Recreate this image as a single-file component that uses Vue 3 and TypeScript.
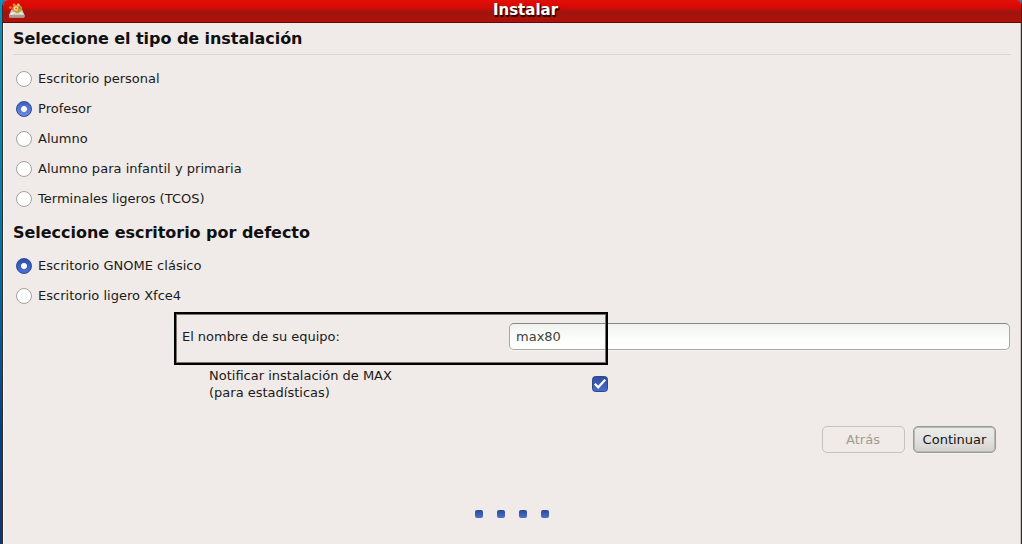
<script setup lang="ts">
import { ref } from 'vue'

const installTypes: string[] = [
  'Escritorio personal',
  'Profesor',
  'Alumno',
  'Alumno para infantil y primaria',
  'Terminales ligeros (TCOS)',
]
const desktops: string[] = ['Escritorio GNOME clásico', 'Escritorio ligero Xfce4']

const installType = ref<string>('Profesor')
const desktop = ref<string>('Escritorio GNOME clásico')
const hostName = ref<string>('max80')
const notify = ref<boolean>(true)
</script>

<template>
  <div class="screen">
    <div class="window">
      <header class="titlebar">
        <svg class="app-icon" width="18" height="18" viewBox="0 0 18 18">
          <path d="M3.5 7.5 L14 7.5 L16.5 13 L16.5 14.5 Q16.5 15.5 15.5 15.5 L2 15.5 Q1 15.5 1 14.5 L1 13 Z" fill="#cfc9c4" />
          <path d="M1 13 H16.5 V14.5 Q16.5 15.5 15.5 15.5 H2 Q1 15.5 1 14.5 Z" fill="#a5a09a" />
          <path d="M3 12 Q9 9 15 12" fill="none" stroke="#f4f1ec" stroke-width="1.5" />
          <circle cx="8" cy="6.6" r="3" fill="#f2dfb0" stroke="#e8822e" stroke-width="1.5" />
          <path d="M9.5 3.5 Q14 4 13 7.5 Q11.5 10.5 7.5 10.2" fill="none" stroke="#9ab832" stroke-width="1.7" />
          <circle cx="6" cy="2.8" r="1.4" fill="#f08a24" />
          <circle cx="10.3" cy="2.8" r="1.4" fill="#efc27a" />
          <circle cx="2.4" cy="5.6" r="1.4" fill="#ef6a18" />
          <circle cx="8.2" cy="6.6" r="1.1" fill="#e8692a" />
        </svg>
        <span class="title">Instalar</span>
      </header>

      <main class="content">
        <h2 class="heading first">Seleccione el tipo de instalación</h2>
        <hr class="rule" />
        <div class="options">
          <label v-for="item in installTypes" :key="item" class="option">
            <input v-model="installType" class="radio light" type="radio" name="type" :value="item" />
            <span>{{ item }}</span>
          </label>
        </div>

        <h2 class="heading second">Seleccione escritorio por defecto</h2>
        <div class="options desktops">
          <label v-for="item in desktops" :key="item" class="option">
            <input v-model="desktop" class="radio" type="radio" name="desktop" :value="item" />
            <span>{{ item }}</span>
          </label>
        </div>

        <div class="host-row">
          <label class="host-label" for="host">El nombre de su equipo:</label>
          <input id="host" v-model="hostName" class="entry" type="text" spellcheck="false" />
          <div class="highlight"></div>
        </div>

        <label class="notify">
          <span class="notify-text">Notificar instalación de MAX<br />(para estadísticas)</span>
          <input v-model="notify" class="hidden-check" type="checkbox" />
          <svg class="check" width="16" height="16" viewBox="0 0 16 16">
            <defs>
              <linearGradient id="check-fill" x1="0" y1="0" x2="0" y2="1">
                <stop offset="0" stop-color="#2c4c9e" />
                <stop offset="1" stop-color="#4a6ed0" />
              </linearGradient>
            </defs>
            <rect x="0.5" y="0.5" width="15" height="15" rx="3" fill="url(#check-fill)" stroke="#2b478f" />
            <path v-if="notify" d="M2.8 7.8 L6.2 11.3 L13.2 3.8" fill="none" stroke="#fff" stroke-width="2.2" />
          </svg>
        </label>

        <div class="actions">
          <button class="button" type="button" disabled>Atrás</button>
          <button class="button primary" type="button">Continuar</button>
        </div>

        <div class="steps">
          <i v-for="n in 4" :key="n" class="step"></i>
        </div>
      </main>
    </div>
  </div>
</template>

<style>
body {
  margin: 0;
  overflow: hidden;
}
</style>

<style scoped>
.screen {
  box-sizing: border-box;
  width: 1022px;
  height: 544px;
  padding-left: 2px;
  overflow: hidden;
  background: linear-gradient(#168fba 0, #087fac 35%, #0766a0 55%, #06418c 78%, #12366f 100%);
  font-family: "DejaVu Sans", sans-serif;
  font-size: 13px;
  color: #1a1a1a;
}
.window {
  box-sizing: border-box;
  width: 1020px;
  height: 544px;
  border-left: 1px solid #302d2b;
  border-right: 1px solid #302d2b;
  border-radius: 6px 5px 0 0;
  background: #f0ebe8;
  overflow: hidden;
}
.titlebar {
  box-sizing: border-box;
  display: flex;
  align-items: center;
  height: 23px;
  padding-left: 5px;
  border-bottom: 1px solid #600b08;
  background: linear-gradient(#df1009 0, #de0903 5px, #c60e08 9px, #9f150e 12px, #a8130b 17px, #b11008 22px);
}
.app-icon {
  flex: none;
}
.title {
  flex: 1;
  height: 22px;
  padding-left: 4px;
  text-align: center;
  font-size: 15px;
  line-height: 20px;
  font-weight: bold;
  color: #fff;
  text-shadow: 1px 1px 1px #300, 1px 2px 1px #300;
}
.content {
  height: 521px;
  box-sizing: border-box;
  border-left: 1px solid #faf8f7;
  border-right: 1px solid #c9c3bd;
  padding: 6px 9px 0;
}
.heading {
  margin: 0;
  height: 20px;
  font-size: 16px;
  line-height: 20px;
  font-weight: bold;
  letter-spacing: -0.03px;
  color: #101010;
}
.first {
  letter-spacing: -0.06px;
}
.rule {
  margin: 5px 0 0;
  border: 0;
  height: 1px;
  background: #dbd5cf;
}
.options {
  padding: 9px 0 0 3px;
}
.option {
  display: flex;
  align-items: center;
  gap: 6px;
  height: 30px;
}
.option span {
  height: 17px;
  line-height: 15px;
  letter-spacing: 0.02px;
}
.radio {
  appearance: none;
  flex: none;
  box-sizing: border-box;
  width: 16px;
  height: 16px;
  margin: 0;
  border: 1px solid #a2a29e;
  border-radius: 50%;
  background: #fff;
}
.radio:checked {
  border-color: #2a4799;
  background: radial-gradient(circle, #fff 0 2.5px, transparent 3.5px), linear-gradient(#2d50ad, #4b70cf);
}
.radio.light:checked {
  background: radial-gradient(circle, #fff 0 2.5px, transparent 3.5px), linear-gradient(#3e62c0, #6c8de2);
}
.second {
  margin-top: 9px;
}
.desktops {
  padding-top: 8px;
}
.host-row {
  position: relative;
  display: flex;
  align-items: center;
  height: 27px;
  margin: 12px 0 0 169px;
}
.host-label {
  width: 327px;
  letter-spacing: -0.03px;
}
.entry {
  box-sizing: border-box;
  flex: 1;
  min-width: 0;
  height: 27px;
  margin-right: 1px;
  padding: 0 6px 1px;
  border: 1px solid #a5a9a3;
  border-top-color: #858883;
  border-radius: 5px;
  outline: none;
  background: linear-gradient(#f0f3f0, #fcfffc 65%, #fdfffd);
  box-shadow: 0 1px 0 #f7f4f2;
  font: inherit;
  color: #3e423d;
}
.highlight {
  position: absolute;
  left: -8px;
  top: -11px;
  box-sizing: border-box;
  width: 434px;
  height: 53px;
  border: 2px solid #000;
  box-shadow: inset 0 0 0 1px #77736f;
  pointer-events: none;
}
.notify {
  display: flex;
  align-items: center;
  height: 34px;
  margin: 17px 0 0 196px;
  line-height: 17px;
}
.notify-text {
  width: 383px;
}
.hidden-check {
  display: none;
}
.check {
  flex: none;
}
.actions {
  display: flex;
  justify-content: flex-end;
  gap: 8px;
  margin: 25px 15px 0 0;
}
.button {
  box-sizing: border-box;
  height: 27px;
  width: 83px;
  padding: 0 1px 1px 0;
  border: 1px solid #c6c3bd;
  border-radius: 5px;
  background: #f0ebe8;
  font: inherit;
  color: #a09b91;
}
.primary {
  padding-right: 0;
  border-color: #979a96;
  background: linear-gradient(#ebedeb, #e2e2e0 50%, #d3d1ce);
  box-shadow: inset 0 0 0 1px #b8bab6, 0 1px 0 #f7f4f2;
  color: #151515;
}
.steps {
  display: flex;
  justify-content: center;
  gap: 14px;
  margin-top: 57px;
}
.step {
  width: 8px;
  height: 8px;
  border-radius: 2px;
  background: linear-gradient(#294998, #4b70d0);
}
</style>
